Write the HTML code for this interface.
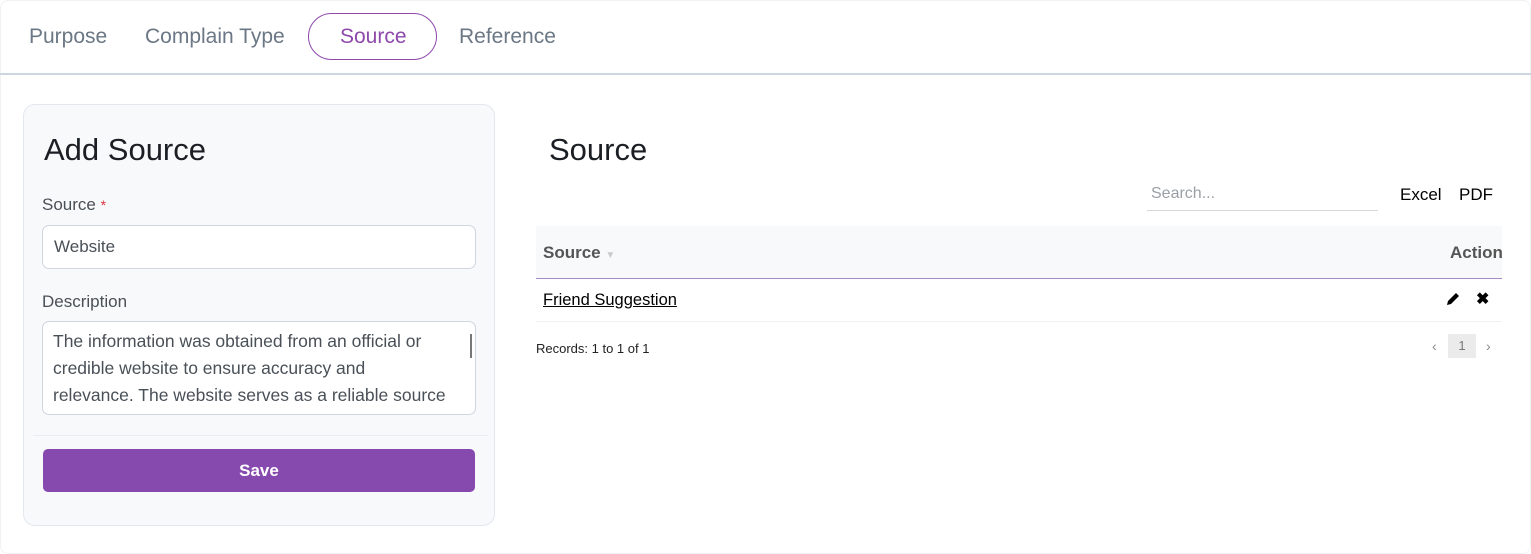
<!DOCTYPE html>
<html><head><style>
*{box-sizing:border-box;margin:0;padding:0}
body{width:1531px;height:554px;background:#fff;font-family:"Liberation Sans",sans-serif;position:relative;overflow:hidden;color:#212529}
.a{position:absolute;white-space:nowrap}
.tab{font-size:21px;color:#6b7785;top:25px}
</style></head><body>
<div class="a" style="left:0;top:0;width:1531px;height:554px;border:1px solid #f0f2f5;border-radius:8px"></div>
<div class="a tab" style="left:29px">Purpose</div>
<div class="a tab" style="left:145px">Complain Type</div>
<div class="a" style="left:308px;top:13px;width:129px;height:47px;border:1px solid #8e49ab;border-radius:24px"></div>
<div class="a tab" style="left:340px;color:#8e49ab">Source</div>
<div class="a tab" style="left:459px">Reference</div>
<div class="a" style="left:0;top:73px;width:1531px;height:2px;background:#cdd5de"></div>

<div class="a" style="left:23px;top:104px;width:472px;height:422px;background:#f8f9fb;border:1px solid #e3e7ee;border-radius:12px"></div>
<div class="a" style="left:44px;top:132px;font-size:31px;color:#1b1f24">Add Source</div>
<div class="a" style="left:42px;top:195px;font-size:17px;color:#495057">Source <span style="color:#d9333f;font-size:14px">*</span></div>
<div class="a" style="left:42px;top:225px;width:434px;height:44px;background:#fff;border:1px solid #cfd6e0;border-radius:7px"></div>
<div class="a" style="left:54px;top:237px;font-size:17px;color:#495057">Website</div>
<div class="a" style="left:42px;top:292px;font-size:17px;color:#495057">Description</div>
<div class="a" style="left:42px;top:321px;width:434px;height:94px;background:#fff;border:1px solid #cfd6e0;border-radius:7px;overflow:hidden"></div>
<div class="a" style="left:53px;top:328px;font-size:17.5px;line-height:27px;color:#495057;white-space:normal;width:418px">The information was obtained from an official or<br>credible website to ensure accuracy and<br>relevance. The website serves as a reliable source</div>
<div class="a" style="left:470px;top:334px;width:2px;height:24px;background:#777"></div>
<div class="a" style="left:33px;top:435px;width:455px;height:1px;background:#e9ecf0"></div>
<div class="a" style="left:43px;top:449px;width:432px;height:43px;background:#8649ad;border-radius:5px;color:#fff;font-size:17px;font-weight:bold;text-align:center;line-height:43px">Save</div>

<div class="a" style="left:549px;top:132px;font-size:31px;color:#1b1f24">Source</div>
<div class="a" style="left:1151px;top:185px;font-size:16px;color:#9aa0a6">Search...</div>
<div class="a" style="left:1147px;top:210px;width:231px;height:1px;background:#d9d9d9"></div>
<div class="a" style="left:1400px;top:185px;font-size:17px;color:#000">Excel</div>
<div class="a" style="left:1459px;top:185px;font-size:17px;color:#000">PDF</div>
<div class="a" style="left:536px;top:226px;width:966px;height:53px;background:#f8f9fa;border-bottom:1px solid #a98bc4"></div>
<div class="a" style="left:543px;top:243px;font-size:17px;font-weight:bold;color:#555">Source <span style="color:#ccc;font-size:10px">▼</span></div>
<div class="a" style="left:1450px;top:243px;font-size:17px;font-weight:bold;color:#555">Action</div>
<div class="a" style="left:543px;top:291px;font-size:16.5px;color:#000;text-decoration:underline">Friend Suggestion</div>
<svg class="a" style="left:1445px;top:291px" width="16" height="16" viewBox="0 0 16 16"><path d="M2 14l1-4 8-8 3 3-8 8z" fill="#000"/></svg>
<div class="a" style="left:1476px;top:289px;font-size:16px;font-weight:bold;color:#000">✖</div>
<div class="a" style="left:536px;top:321px;width:966px;height:1px;background:#eef0f2"></div>
<div class="a" style="left:536px;top:341px;font-size:13px;color:#222">Records: 1 to 1 of 1</div>
<div class="a" style="left:1432px;top:338px;font-size:14px;color:#888">‹</div>
<div class="a" style="left:1448px;top:334px;width:28px;height:24px;background:#ebebeb;text-align:center;line-height:24px;font-size:13px;color:#777">1</div>
<div class="a" style="left:1486px;top:338px;font-size:14px;color:#888">›</div>
</body></html>
